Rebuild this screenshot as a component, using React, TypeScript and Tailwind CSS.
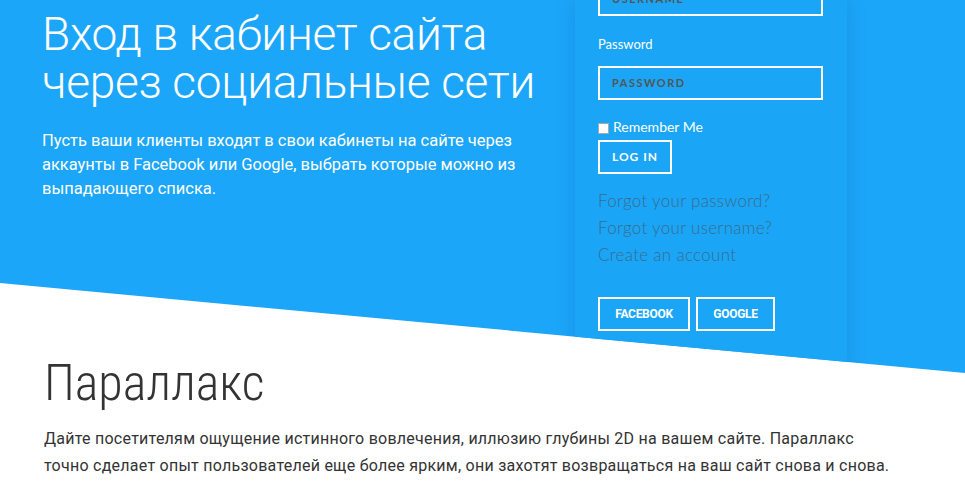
export default function App() {
  return (
    <div className="w-[965px] h-[500px] overflow-hidden bg-white relative">
      <section
        className="h-[373px] bg-[#1ca6f9] flex"
        style={{ clipPath: "polygon(0 0, 100% 0, 100% 373px, 0 283px)" }}
      >
        <div className="w-[575px] pl-[42px] pt-[10px] font-['Roboto',sans-serif] text-white">
          <h1 className="text-[46px] leading-[48px] font-light tracking-[-0.3px]">
            Вход в кабинет сайта
            <br />
            через социальные сети
          </h1>
          <p className="mt-[23px] w-[500px] text-[16.5px] leading-[24px] tracking-[-0.02px]">
            Пусть ваши клиенты входят в свои кабинеты на сайте через аккаунты в Facebook или Google, выбрать которые можно из выпадающего списка.
          </p>
        </div>
        <div className="w-[272px] h-full bg-[#1aa5f6] shadow-[0_0_18px_rgba(0,60,120,0.18)] pl-[23px] font-['Lato',sans-serif]">
          <div className="-mt-[18px] w-[225px] h-[34px] border-2 border-white flex items-center pl-[12px] text-[11px] font-bold tracking-[1.5px] text-[#555]">
            USERNAME
          </div>
          <div className="mt-[19px] text-[13px] leading-[18px] text-white">Password</div>
          <div className="mt-[13px] w-[225px] h-[34px] border-2 border-white flex items-center pl-[12px] text-[11px] font-bold tracking-[1.5px] text-[#555]">
            PASSWORD
          </div>
          <label className="mt-[18px] flex items-center gap-[4px] text-[14px] leading-[18px] text-white">
            <span className="w-[11px] h-[11px] bg-white border border-[#aaa] mt-[2px]" />
            Remember Me
          </label>
          <button className="mt-[4px] h-[34px] w-[74px] border-2 border-white text-white text-[12px] font-bold tracking-[1px] flex items-center justify-center">
            LOG IN
          </button>
          <div className="mt-[16px] flex flex-col gap-[6px] text-[17px] leading-[21px] font-light tracking-[0.3px] text-[#3a6c8f]">
            <span>Forgot your password?</span>
            <span>Forgot your username?</span>
            <span>Create an account</span>
          </div>
          <div className="mt-[32px] flex gap-[6px] font-['Roboto',sans-serif]">
            <button className="h-[34px] w-[92px] border-2 border-white text-white text-[12px] font-bold tracking-[-0.3px]">
              FACEBOOK
            </button>
            <button className="h-[34px] w-[79px] border-2 border-white text-white text-[12px] font-bold tracking-[-0.3px]">
              GOOGLE
            </button>
          </div>
        </div>
      </section>
      <section className="absolute left-0 top-[355px] pl-[44px] text-[#333]">
        <h2 className="text-[50px] leading-[56px] font-light font-['Liberation_Sans_Narrow','Roboto_Condensed',Roboto,sans-serif]">
          Параллакс
        </h2>
        <p className="mt-[14px] text-[16px] leading-[27px] w-[915px] tracking-[0.25px] font-['Roboto',sans-serif]">
          Дайте посетителям ощущение истинного вовлечения, иллюзию глубины 2D на вашем сайте. Параллакс
          <br />
          точно сделает опыт пользователей еще более ярким, они захотят возвращаться на ваш сайт снова и снова.
        </p>
      </section>
    </div>
  );
}
